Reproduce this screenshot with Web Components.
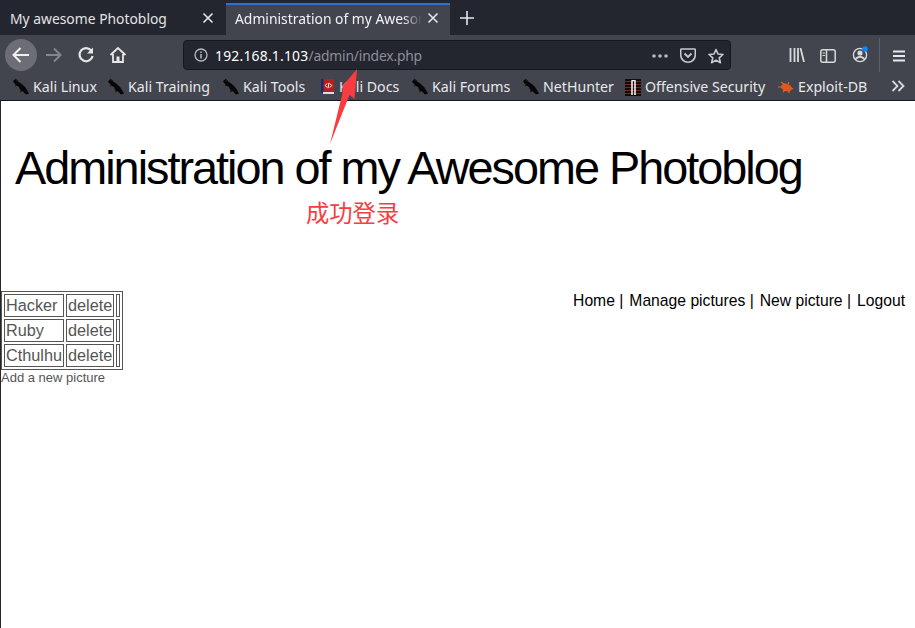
<!DOCTYPE html>
<html lang="en"><head><meta charset="utf-8"><title>Administration</title>
<style>
html,body{margin:0;padding:0;height:100%;background:#fff}
body{width:915px;height:628px;overflow:hidden;position:relative;font-family:"Liberation Sans",sans-serif}
</style></head><body>
<browser-chrome></browser-chrome>
<blog-page></blog-page>
<red-note></red-note>
<script>
const svg=(w,h,inner,extra='')=>`<svg width="${w}" height="${h}" viewBox="0 0 ${w} ${h}" fill="none" ${extra}>${inner}</svg>`;
const kali=svg(18,18,`<path d="M1 3L3 1.5L5 3L7 4L9 5.5L11 7L13 9L15 12L17 15.5L14 16.5L11 13.5L8.5 12.5L7 9L4 7L2 5Z" fill="#070707"/><path d="M3 1L6 3M5 7L3 8M10 13L8 14" stroke="#111" stroke-width="1"/>`);
const doc=svg(16,17,`<rect x="1" y="1" width="13" height="14" fill="#b5201c"/><rect x="1" y="1" width="2.5" height="14" fill="#1d2a6b"/><rect x="3" y="14" width="11" height="2" fill="#ddd"/><path d="M7 5.5L5.3 7.5L7 9.5M10 5.5L11.7 7.5L10 9.5M9 4.8L8 10.2" stroke="#fff" stroke-width="1"/>`);
const off=svg(16,18,`<rect width="16" height="17" y="1" fill="#1a0807"/><path d="M0 3.5H16M0 6.5H16M0 9.5H16M0 12.5H16M0 15.5H16" stroke="#6a2a2a" stroke-width="1"/><path d="M7 2.5V17M10 2.5V17" stroke="#eee" stroke-width="1.6"/><path d="M6.5 2.5H10.5" stroke="#eee"/>`);
const bug=svg(18,14,`<ellipse cx="9.5" cy="7.5" rx="5.5" ry="3.8" fill="#e2551e" transform="rotate(20 9.5 7.5)"/><path d="M1 7H5M4 2L8 5M12 2L11 4M6 12L8 10M12 13L12 10M16 9L14 8" stroke="#e2681e" stroke-width="1.2"/>`);

customElements.define('browser-tab',class extends HTMLElement{
 constructor(){super();const a=this.hasAttribute('active');this.attachShadow({mode:'open'}).innerHTML=`<style>
 :host{display:flex;align-items:center;box-sizing:border-box;height:32px;width:${a?'224px':'226px'};padding-left:${a?'9px':'10px'};position:relative;
  background:${a?'#42444e':'transparent'};color:${a?'#f2f3f5':'#e3e4e6'};${a?'border-top:2px solid #2f6fdb;padding-bottom:4px;':'padding-bottom:2px;'}font:13.87px "Noto Sans",sans-serif}
 .t{flex:none;width:190px;overflow:hidden;white-space:nowrap;${a?'-webkit-mask-image:linear-gradient(90deg,#000 168px,transparent 187px);':''}}
 svg{position:absolute;right:${a?'11px':'12px'};top:${a?'7px':'9px'}}
 </style><span class="t"><slot></slot></span>${svg(12,12,'<path d="M1.5 1.5L10.5 10.5M10.5 1.5L1.5 10.5" stroke="#e6e7e9" stroke-width="1.6"/>')}`;}
});
customElements.define('book-mark',class extends HTMLElement{
 constructor(){super();this.attachShadow({mode:'open'}).innerHTML=`<style>
 :host{display:inline-flex;flex:none;box-sizing:border-box;width:var(--w);align-items:center;gap:var(--g,3px);height:22px;color:#e8e9eb;font:14.2px "Noto Sans",sans-serif;white-space:nowrap}
 ::slotted(span){display:flex}
 </style><slot name="i"></slot><span><slot></slot></span>`;}
});
customElements.define('browser-chrome',class extends HTMLElement{
 constructor(){super();this.attachShadow({mode:'open'}).innerHTML=`<style>
 :host{display:block;background:#42444e}
 .tabs{height:35px;background:#23252f;display:flex;align-items:flex-start;box-sizing:border-box;padding-top:3px}
 .plus{margin:8px 0 0 10px;display:block}
 .bar{height:35px;display:flex;align-items:center;position:relative;padding:5px 0 0 5px;box-sizing:border-box}
 .back{width:32px;height:32px;border-radius:50%;background:#6d6e75;display:flex;align-items:center;justify-content:center;flex:none;position:relative;z-index:1}
 .ic{flex:none;display:block}
 .url{position:absolute;left:183px;top:5px;width:548px;height:30px;box-sizing:border-box;background:#23252f;border:1px solid #17181e;border-radius:4px;display:flex;align-items:center;padding-left:10px;font:13.87px "Noto Sans",sans-serif;color:#fff}
 .url b{font-weight:400;margin-left:7px;letter-spacing:.23px}.url i{font-style:normal;color:#8d8f97;letter-spacing:-.19px}
 .r{position:absolute;display:block}
 .sep{position:absolute;left:879px;top:3px;width:1px;height:34px;background:#5e6068}
 .marks{height:31px;display:flex;align-items:center;box-sizing:border-box;padding:3px 0 0 12px;position:relative;border-bottom:1px solid #16171c}
 .more{position:absolute;left:891px;top:10px}
 </style>
 <div class="tabs"><browser-tab>My awesome Photoblog</browser-tab><browser-tab active>Administration of my Awesome Photoblog</browser-tab>
  ${svg(14,14,'<path d="M7 0V14M0 7H14" stroke="#e6e7e9" stroke-width="1.6"/>','class="plus"')}</div>
 <div class="bar">
  <div class="back">${svg(20,18,'<path d="M9.5 2L2.5 9L9.5 16M3 9H18" stroke="#f0f0f2" stroke-width="2"/>')}</div>
  ${svg(20,18,'<path d="M10 2.5L16.5 9L10 15.5M2 9H16" stroke="#85868c" stroke-width="2"/>','class="ic" style="margin-left:7px"')}
  ${svg(18,18,'<path d="M14.5 4.8A6.6 6.6 0 1 0 15.6 10" stroke="#e6e7e9" stroke-width="2.2"/><path d="M16 1.5V7.5H10Z" fill="#e6e7e9"/>','class="ic" style="margin-left:13px;margin-top:-1px"')}
  ${svg(18,18,'<path d="M1.5 9L9 2L16.5 9M4 8V16H14V8" stroke="#e6e7e9" stroke-width="1.8"/><rect x="7.5" y="10.5" width="3" height="5" fill="#e6e7e9"/>','class="ic" style="margin-left:14px"')}
  <div class="url">${svg(14,14,'<circle cx="7" cy="7" r="6" stroke="#b9babe" stroke-width="1.3"/><path d="M7 6V10.5M7 3.5V5" stroke="#b9babe" stroke-width="1.5"/>')}<b>192.168.1.103<i>/admin/index.php</i></b>
   ${svg(16,4,'<circle cx="2" cy="2" r="1.8" fill="#b9babe"/><circle cx="8" cy="2" r="1.8" fill="#b9babe"/><circle cx="14" cy="2" r="1.8" fill="#b9babe"/>','class="r" style="left:468px;top:13px"')}
   ${svg(16,16,'<path d="M1.5 1H14.5Q15.3 1 15.3 2V7A7.3 7.3 0 0 1 .7 7V2Q.7 1 1.5 1Z" stroke="#c9cacd" stroke-width="1.6"/><path d="M4.5 5.5L8 9L11.5 5.5" stroke="#c9cacd" stroke-width="1.8"/>','class="r" style="left:496px;top:7px"')}
   ${svg(16,16,'<path d="M8 1.5L10 6L15 6.5L11.2 9.8L12.4 14.7L8 12.1L3.6 14.7L4.8 9.8L1 6.5L6 6Z" stroke="#c9cacd" stroke-width="1.6" stroke-linejoin="round"/>','class="r" style="left:524px;top:7px"')}
  </div>
  ${svg(16,14,'<path d="M1.5 0V14M5.5 0V14M9 0V14M11.5 0L15 14" stroke="#d8d9db" stroke-width="1.8"/>','class="r" style="left:789px;top:13px"')}
  ${svg(16,14,'<rect x=".8" y=".8" width="14.4" height="12.4" rx="2" stroke="#d8d9db" stroke-width="1.5"/><path d="M6.5 1V13" stroke="#d8d9db" stroke-width="1.5"/><path d="M2.5 4H5M2.5 6.5H5" stroke="#d8d9db"/>','class="r" style="left:820px;top:14px"')}
  ${svg(18,18,'<circle cx="8" cy="10" r="6.6" stroke="#d8d9db" stroke-width="1.4"/><circle cx="8" cy="8" r="2.6" fill="#d8d9db"/><path d="M3.5 14Q8 9.5 12.5 14" stroke="#d8d9db" stroke-width="2"/><circle cx="13" cy="4" r="2.8" fill="#0a84ff"/>','class="r" style="left:852px;top:10px"')}
  <div class="sep"></div>
  ${svg(14,12,'<path d="M1 1.5H13M1 6H13M1 10.5H13" stroke="#e6e7e9" stroke-width="1.8"/>','class="r" style="left:892px;top:15px"')}
 </div>
 <div class="marks">
  <book-mark style="--w:95px"><span slot="i">${kali}</span>Kali Linux</book-mark>
  <book-mark style="--w:115px"><span slot="i">${kali}</span>Kali Training</book-mark>
  <book-mark style="--w:98px"><span slot="i">${kali}</span>Kali Tools</book-mark>
  <book-mark style="--w:91px"><span slot="i">${doc}</span>Kali Docs</book-mark>
  <book-mark style="--w:111px"><span slot="i">${kali}</span>Kali Forums</book-mark>
  <book-mark style="--w:103px"><span slot="i">${kali}</span>NetHunter</book-mark>
  <book-mark style="--w:152px;--g:4px"><span slot="i">${off}</span>Offensive Security</book-mark>
  <book-mark style="--w:100px"><span slot="i">${bug}</span>Exploit-DB</book-mark>
  ${svg(14,12,'<path d="M1.5 1L6.5 6L1.5 11M7.5 1L12.5 6L7.5 11" stroke="#d8d9db" stroke-width="1.8"/>','class="more"')}
 </div>`;}
});
customElements.define('blog-page',class extends HTMLElement{
 constructor(){super();const rows=['Hacker','Ruby','Cthulhu'].map(n=>`<tr><td>${n}</td><td>delete</td><td></td></tr>`).join('');
 this.attachShadow({mode:'open'}).innerHTML=`<style>
 :host{display:block;height:527px;border-left:1px solid #23252f;box-sizing:border-box;color:#000;font-family:"Liberation Sans",sans-serif;position:relative}
 h1{margin:0;padding:38px 0 0 14px;font-size:46.8px;font-weight:400;letter-spacing:-2px;line-height:58px;height:190px;box-sizing:border-box}
 nav{float:right;margin:1px 10px 0 0;font-size:15.7px;line-height:18px}
 nav span{margin-left:6px}
 table{border:1px solid #555;border-spacing:2px;color:#555;font-size:16.25px}
 td{border:1px solid #555;padding:1px;line-height:19px;height:19px}
 .add{font-size:13px;color:#555;line-height:15px;display:block}
 </style><h1>Administration of my Awesome Photoblog</h1>
 <nav><span>Home |</span><span>Manage pictures |</span><span>New picture |</span><span>Logout</span></nav>
 <table>${rows}</table><span class="add">Add a new picture</span>`;}
});
customElements.define('red-note',class extends HTMLElement{
 constructor(){super();this.attachShadow({mode:'open'}).innerHTML=`<style>
 :host{display:block;position:absolute;left:0;top:0}
 svg{position:absolute;left:325px;top:65px}
 span{position:absolute;left:306px;top:198px;white-space:nowrap;color:#f63e42;font:23.3px/28px "Noto Sans CJK SC",sans-serif}
 </style>${svg(40,82,'<path d="M32 4L29.5 34L24.5 30L5 79L17.5 28L17.5 21Z" fill="#f93c3f"/>')}<span>成功登录</span>`;}
});
</script>
</body></html>
